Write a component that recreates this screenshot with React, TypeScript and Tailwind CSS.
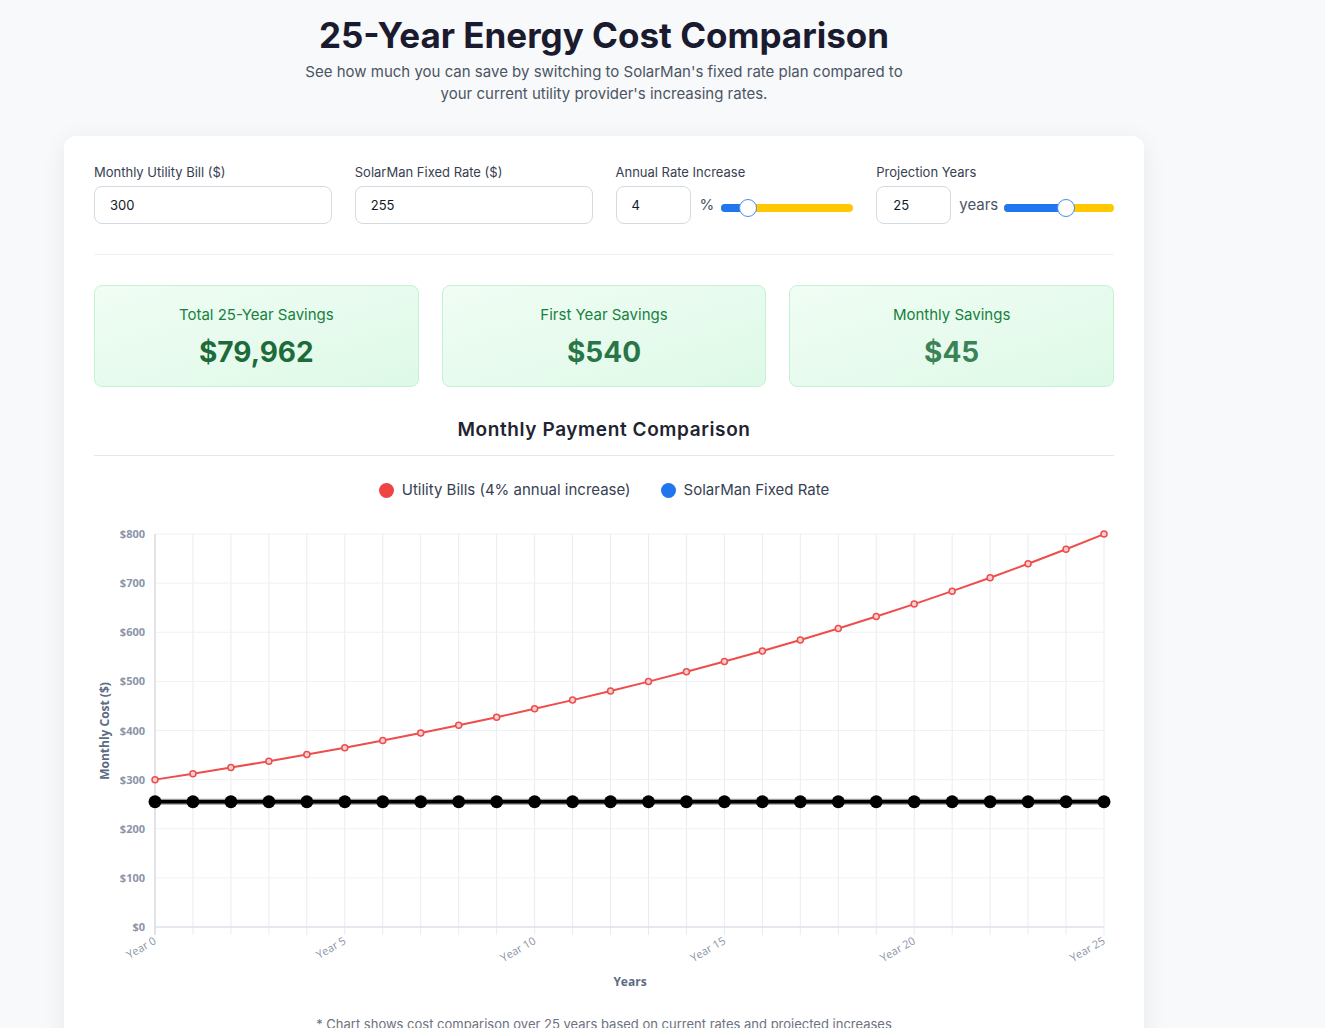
import React from "react";

const years = Array.from({ length: 26 }, (_, i) => i);
const utility = years.map((i) => 300 * Math.pow(1.04, i));
const solar = 255;

// plot area inside the svg
const L = 61;
const R = 1010;
const T = 23;
const B = 416;
const xAt = (i: number) => L + (i * (R - L)) / 25;
const yAt = (v: number) => B - (v * (B - T)) / 800;

function Chart() {
  const redPath = utility.map((v, i) => `${i === 0 ? "M" : "L"}${xAt(i)},${yAt(v)}`).join(" ");
  return (
    <svg width={1020} height={490} className="block" style={{ fontFamily: "'Open Sans', 'Liberation Sans', sans-serif" }}>
      {/* grid */}
      {years.map((i) => (
        <line key={"v" + i} x1={xAt(i)} x2={xAt(i)} y1={T} y2={B + 8} stroke="#e8ecf1" strokeWidth={1} />
      ))}
      {[100, 200, 300, 400, 500, 600, 700, 800].map((v) => (
        <line key={"h" + v} x1={L} x2={R} y1={yAt(v)} y2={yAt(v)} stroke="#eef1f5" strokeWidth={1} />
      ))}
      <line x1={L} x2={R} y1={B} y2={B} stroke="#dde2ea" strokeWidth={1.5} />
      <line x1={L} x2={L} y1={T} y2={B + 8} stroke="#d4d8df" strokeWidth={1.2} />

      {/* y ticks */}
      {[0, 100, 200, 300, 400, 500, 600, 700, 800].map((v) => (
        <text key={"yl" + v} x={L - 10} y={yAt(v) + 4} textAnchor="end" fontSize={11} fontWeight={700} fill="#8a95a8">
          ${v}
        </text>
      ))}
      <text
        x={15}
        y={220}
        transform="rotate(-90 15 220)"
        textAnchor="middle"
        fontSize={12}
        fontWeight={700}
        fill="#5c6b84"
      >
        Monthly Cost ($)
      </text>

      {/* x ticks */}
      {[0, 5, 10, 15, 20, 25].map((i) => (
        <text
          key={"xl" + i}
          x={xAt(i) + 2}
          y={B + 16}
          transform={`rotate(-30 ${xAt(i) + 2} ${B + 16})`}
          textAnchor="end"
          fontSize={11}
          fill="#8a95a8"
        >
          Year {i}
        </text>
      ))}
      <text x={536} y={475} textAnchor="middle" fontSize={12} fontWeight={700} fill="#5c6b84">
        Years
      </text>

      {/* utility line */}
      <path d={redPath} fill="none" stroke="#ef4c4c" strokeWidth={2} />
      {utility.map((v, i) => (
        <circle key={"r" + i} cx={xAt(i)} cy={yAt(v)} r={3} fill="#fbd0d0" stroke="#ef4c4c" strokeWidth={1.5} />
      ))}

      {/* solarman line */}
      <line x1={xAt(0)} x2={xAt(25)} y1={yAt(solar)} y2={yAt(solar)} stroke="#9a9a9a" strokeWidth={6} />
      <line x1={xAt(0)} x2={xAt(25)} y1={yAt(solar)} y2={yAt(solar)} stroke="#000" strokeWidth={3.5} />
      {years.map((i) => (
        <circle key={"b" + i} cx={xAt(i)} cy={yAt(solar)} r={6.5} fill="#000" />
      ))}
    </svg>
  );
}

function Slider({ pct }: { pct: number }) {
  return (
    <div className="relative mt-[6px] h-2 flex-1 rounded-full bg-[#ffc800]">
      <div className="absolute left-0 top-0 h-2 rounded-full bg-[#2075f0]" style={{ width: `${pct}%` }} />
      <div
        className="absolute top-1/2 h-[18px] w-[18px] -translate-x-1/2 -translate-y-1/2 rounded-full border border-[#4a8af4] bg-white"
        style={{ left: `${pct}%` }}
      />
    </div>
  );
}

function StatCard({ label, value, color }: { label: string; value: string; color: string }) {
  return (
    <div className="flex h-[102px] flex-col items-center rounded-lg border border-[#c4f3d4] bg-gradient-to-br from-[#f0fdf4] to-[#def9e7] pt-[19px]">
      <div className="text-[15px] leading-5 text-[#18803f]">{label}</div>
      <div className={`mt-[9px] text-[28px] font-bold leading-9 ${color}`}>{value}</div>
    </div>
  );
}

export default function App() {
  return (
    <div className="min-h-screen bg-[#f8f9fb]" style={{ fontFamily: "Inter, 'Noto Sans', sans-serif" }}>
      <div className="ml-[64px] w-[1080px] pt-[15px]">
        <h1 className="text-center text-[35px] font-bold leading-10 text-[#1b1b2f]">
          25-Year Energy Cost Comparison
        </h1>
        <p className="mx-auto mt-[6px] max-w-[610px] text-center text-[15px] leading-[22px] text-[#4b5563]">
          See how much you can save by switching to SolarMan's fixed rate plan compared to your current utility
          provider's increasing rates.
        </p>

        <div className="mt-[31px] rounded-xl bg-white px-[30px] pb-[30px] pt-[26px] shadow-[0_4px_24px_rgba(0,0,0,0.07)]">
          {/* inputs */}
          <div className="grid grid-cols-4 gap-x-[23px]">
            <div>
              <label className="block text-[13px] leading-5 text-[#374151]">Monthly Utility Bill ($)</label>
              <input
                readOnly
                value="300"
                className="mt-1 h-[38px] w-full rounded-lg border border-[#d5d9e0] px-[15px] text-[13px] text-[#111827] outline-none"
              />
            </div>
            <div>
              <label className="block text-[13px] leading-5 text-[#374151]">SolarMan Fixed Rate ($)</label>
              <input
                readOnly
                value="255"
                className="mt-1 h-[38px] w-full rounded-lg border border-[#d5d9e0] px-[15px] text-[13px] text-[#111827] outline-none"
              />
            </div>
            <div>
              <label className="block text-[13px] leading-5 text-[#374151]">Annual Rate Increase</label>
              <div className="mt-1 flex items-center">
                <input
                  readOnly
                  value="4"
                  className="h-[38px] w-[75px] rounded-lg border border-[#d5d9e0] px-[15px] text-[13px] text-[#111827] outline-none"
                />
                <span className="ml-[9px] mr-[7px] text-[15px] text-[#4b5563]">%</span>
                <Slider pct={20} />
              </div>
            </div>
            <div>
              <label className="block text-[13px] leading-5 text-[#374151]">Projection Years</label>
              <div className="mt-1 flex items-center">
                <input
                  readOnly
                  value="25"
                  className="h-[38px] w-[75px] rounded-lg border border-[#d5d9e0] px-[16px] text-[13px] text-[#111827] outline-none"
                />
                <span className="ml-[8px] mr-[6px] text-[15px] text-[#4b5563]">years</span>
                <Slider pct={56} />
              </div>
            </div>
          </div>

          <div className="mt-[30px] border-t border-[#f0f1f3]" />

          {/* summary cards */}
          <div className="mt-[30px] grid grid-cols-3 gap-x-[23px]">
            <StatCard label="Total 25-Year Savings" value="$79,962" color="text-[#1d6b3a]" />
            <StatCard label="First Year Savings" value="$540" color="text-[#2a7548]" />
            <StatCard label="Monthly Savings" value="$45" color="text-[#3b8257]" />
          </div>

          {/* chart */}
          <h2 className="mt-[29px] border-b border-[#e5e7eb] pb-[11px] text-center text-[19px] font-semibold leading-7 tracking-[0.6px] text-[#1f2430]">
            Monthly Payment Comparison
          </h2>

          <div className="mt-[22px] flex items-center justify-center gap-[30px] text-[15px] leading-6 text-[#374151]">
            <div className="flex items-center gap-2">
              <span className="inline-block h-[15px] w-[15px] rounded-full bg-[#ef4444]" />
              Utility Bills (4% annual increase)
            </div>
            <div className="flex items-center gap-2">
              <span className="inline-block h-[15px] w-[15px] rounded-full bg-[#2176f0]" />
              SolarMan Fixed Rate
            </div>
          </div>

          <div className="mt-[9px]">
            <Chart />
          </div>

          <p className="mt-[13px] text-center text-[13px] leading-5 text-[#6b7280]">
            * Chart shows cost comparison over 25 years based on current rates and projected increases
          </p>
        </div>
      </div>
    </div>
  );
}
